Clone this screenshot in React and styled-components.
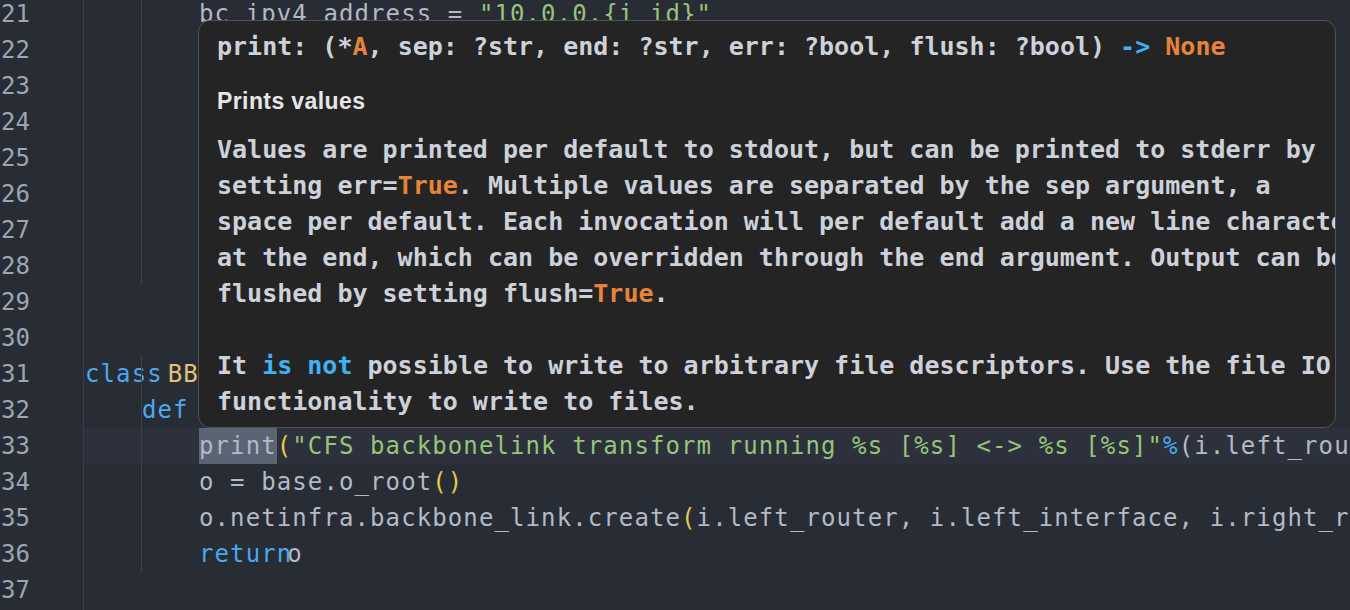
import React from 'react'
import styled, { createGlobalStyle } from 'styled-components'

const GlobalStyle = createGlobalStyle`
  html, body {
    margin: 0;
    padding: 0;
    background: #282c34;
    overflow: hidden;
  }
`

const colors = {
  plain: '#b3b9c5',
  kw: '#4aa8ee',
  cls: '#e5c07b',
  str: '#98c379',
  paren: '#e2c94e',
}

const Editor = styled.div`
  position: relative;
  width: 1350px;
  height: 610px;
  overflow: hidden;
  background: #282c34;
  display: flex;
`
const Gutter = styled.div`
  width: 83px;
  flex-shrink: 0;
  border-right: 1px solid #3a3f4a;
  margin-top: -4px;
`
const LineNumber = styled.div`
  height: 36px;
  line-height: 36px;
  padding-left: 1px;
  font-family: 'DejaVu Sans Mono', monospace;
  font-size: 24px;
  color: #9ea5b1;
`
const Code = styled.div`
  flex: 1;
  margin-top: -4px;
`
const Line = styled.div`
  position: relative;
  height: 36px;
  line-height: 37px;
  padding-left: ${props => props.indent}px;
  white-space: pre;
  font-family: 'DejaVu Sans Mono', monospace;
  font-size: 24px;
  letter-spacing: 1.1px;
  color: ${colors.plain};
  background: ${props => (props.active ? '#2c313b' : 'transparent')};
  &::before {
    content: '';
    display: ${props => (props.guide ? 'block' : 'none')};
    position: absolute;
    left: 57px;
    top: 0;
    bottom: 0;
    width: 1px;
    background: #3b4049;
  }
`
const Token = styled.span`
  display: inline-block;
  height: 36px;
  color: ${props => colors[props.kind] || colors.plain};
  margin-left: ${props => props.shift || 0}px;
  background: ${props => (props.selected ? '#5a6474' : 'transparent')};
`

const Tooltip = styled.div`
  position: absolute;
  left: 198px;
  top: 20px;
  width: 1138px;
  height: 408px;
  box-sizing: border-box;
  overflow: hidden;
  background: #242424;
  border: 1.5px solid #525252;
  border-radius: 12px;
  padding: 8px 18px 8px 18px;
  color: #cdd1d9;
`
const Signature = styled.div`
  height: 36px;
  line-height: 36px;
  white-space: pre;
  font-family: 'DejaVu Sans Mono', monospace;
  font-weight: bold;
  font-size: 25px;
`
const Heading = styled.div`
  margin-top: 18px;
  height: 36px;
  line-height: 36px;
  font-family: 'Liberation Sans', Arial, sans-serif;
  font-weight: bold;
  font-size: 23px;
  letter-spacing: 0.4px;
  color: #e4e6ea;
`
const DocBody = styled.div`
  margin-top: 13px;
`
const DocLine = styled.div`
  height: 36px;
  line-height: 36px;
  white-space: pre;
  font-family: 'DejaVu Sans Mono', monospace;
  font-weight: bold;
  font-size: 25px;
`
const Accent = styled.span`
  color: ${props => (props.tone === 'blue' ? '#3fb1f4' : '#e7843b')};
`

const codeLines = [
  { n: 21, indent: 115, guide: true, tokens: [['bc_ipv4_address = ', 'plain'], ['"10.0.0.{i_id}"', 'str']] },
  { n: 22, indent: 115, guide: true, tokens: [] },
  { n: 23, indent: 115, guide: true, tokens: [] },
  { n: 24, indent: 115, guide: true, tokens: [] },
  { n: 25, indent: 115, guide: true, tokens: [] },
  { n: 26, indent: 115, guide: true, tokens: [] },
  { n: 27, indent: 115, guide: true, tokens: [] },
  { n: 28, indent: 115, guide: true, tokens: [] },
  { n: 29, indent: 1, tokens: [] },
  { n: 30, indent: 1, tokens: [] },
  { n: 31, indent: 1, guide: true, tokens: [['class', 'kw'], ['BB', 'cls', 5]] },
  { n: 32, indent: 58, guide: true, tokens: [['def', 'kw']] },
  {
    n: 33,
    indent: 115,
    guide: true,
    active: true,
    tokens: [
      ['print', 'plain', 0, true],
      ['(', 'paren'],
      ['"CFS backbonelink transform running %s [%s] <-> %s [%s]"', 'str'],
      ['%', 'kw'],
      ['(i.left_router, i.left_interface)', 'plain'],
    ],
  },
  { n: 34, indent: 115, guide: true, tokens: [['o = base.o_root', 'plain'], ['()', 'paren']] },
  {
    n: 35,
    indent: 115,
    guide: true,
    tokens: [
      ['o.netinfra.backbone_link.create', 'plain'],
      ['(', 'paren'],
      ['i.left_router, i.left_interface, i.right_router', 'plain'],
    ],
  },
  { n: 36, indent: 115, guide: true, tokens: [['return', 'kw'], ['o', 'plain', -5]] },
  { n: 37, indent: 1, tokens: [] },
]

const App = () => {
  return (
    <>
      <GlobalStyle />
      <Editor>
        <Gutter>
          {codeLines.map(line => (
            <LineNumber key={line.n}>{line.n}</LineNumber>
          ))}
        </Gutter>
        <Code>
          {codeLines.map(line => (
            <Line key={line.n} indent={line.indent} guide={line.guide} active={line.active}>
              {line.tokens.map(([text, kind, shift, selected], i) => (
                <Token key={i} kind={kind} shift={shift} selected={selected}>
                  {text}
                </Token>
              ))}
            </Line>
          ))}
        </Code>
        <Tooltip>
          <Signature>
            print: (*<Accent>A</Accent>, sep: ?str, end: ?str, err: ?bool, flush: ?bool){' '}
            <Accent tone='blue'>-&gt;</Accent> <Accent>None</Accent>
          </Signature>
          <Heading>Prints values</Heading>
          <DocBody>
            <DocLine>Values are printed per default to stdout, but can be printed to stderr by</DocLine>
            <DocLine>
              setting err=<Accent>True</Accent>. Multiple values are separated by the sep argument, a
            </DocLine>
            <DocLine>space per default. Each invocation will per default add a new line character</DocLine>
            <DocLine>at the end, which can be overridden through the end argument. Output can be</DocLine>
            <DocLine>
              flushed by setting flush=<Accent>True</Accent>.
            </DocLine>
            <DocLine> </DocLine>
            <DocLine>
              It <Accent tone='blue'>is not</Accent> possible to write to arbitrary file descriptors. Use the file IO
            </DocLine>
            <DocLine>functionality to write to files.</DocLine>
          </DocBody>
        </Tooltip>
      </Editor>
    </>
  )
}

export default App
